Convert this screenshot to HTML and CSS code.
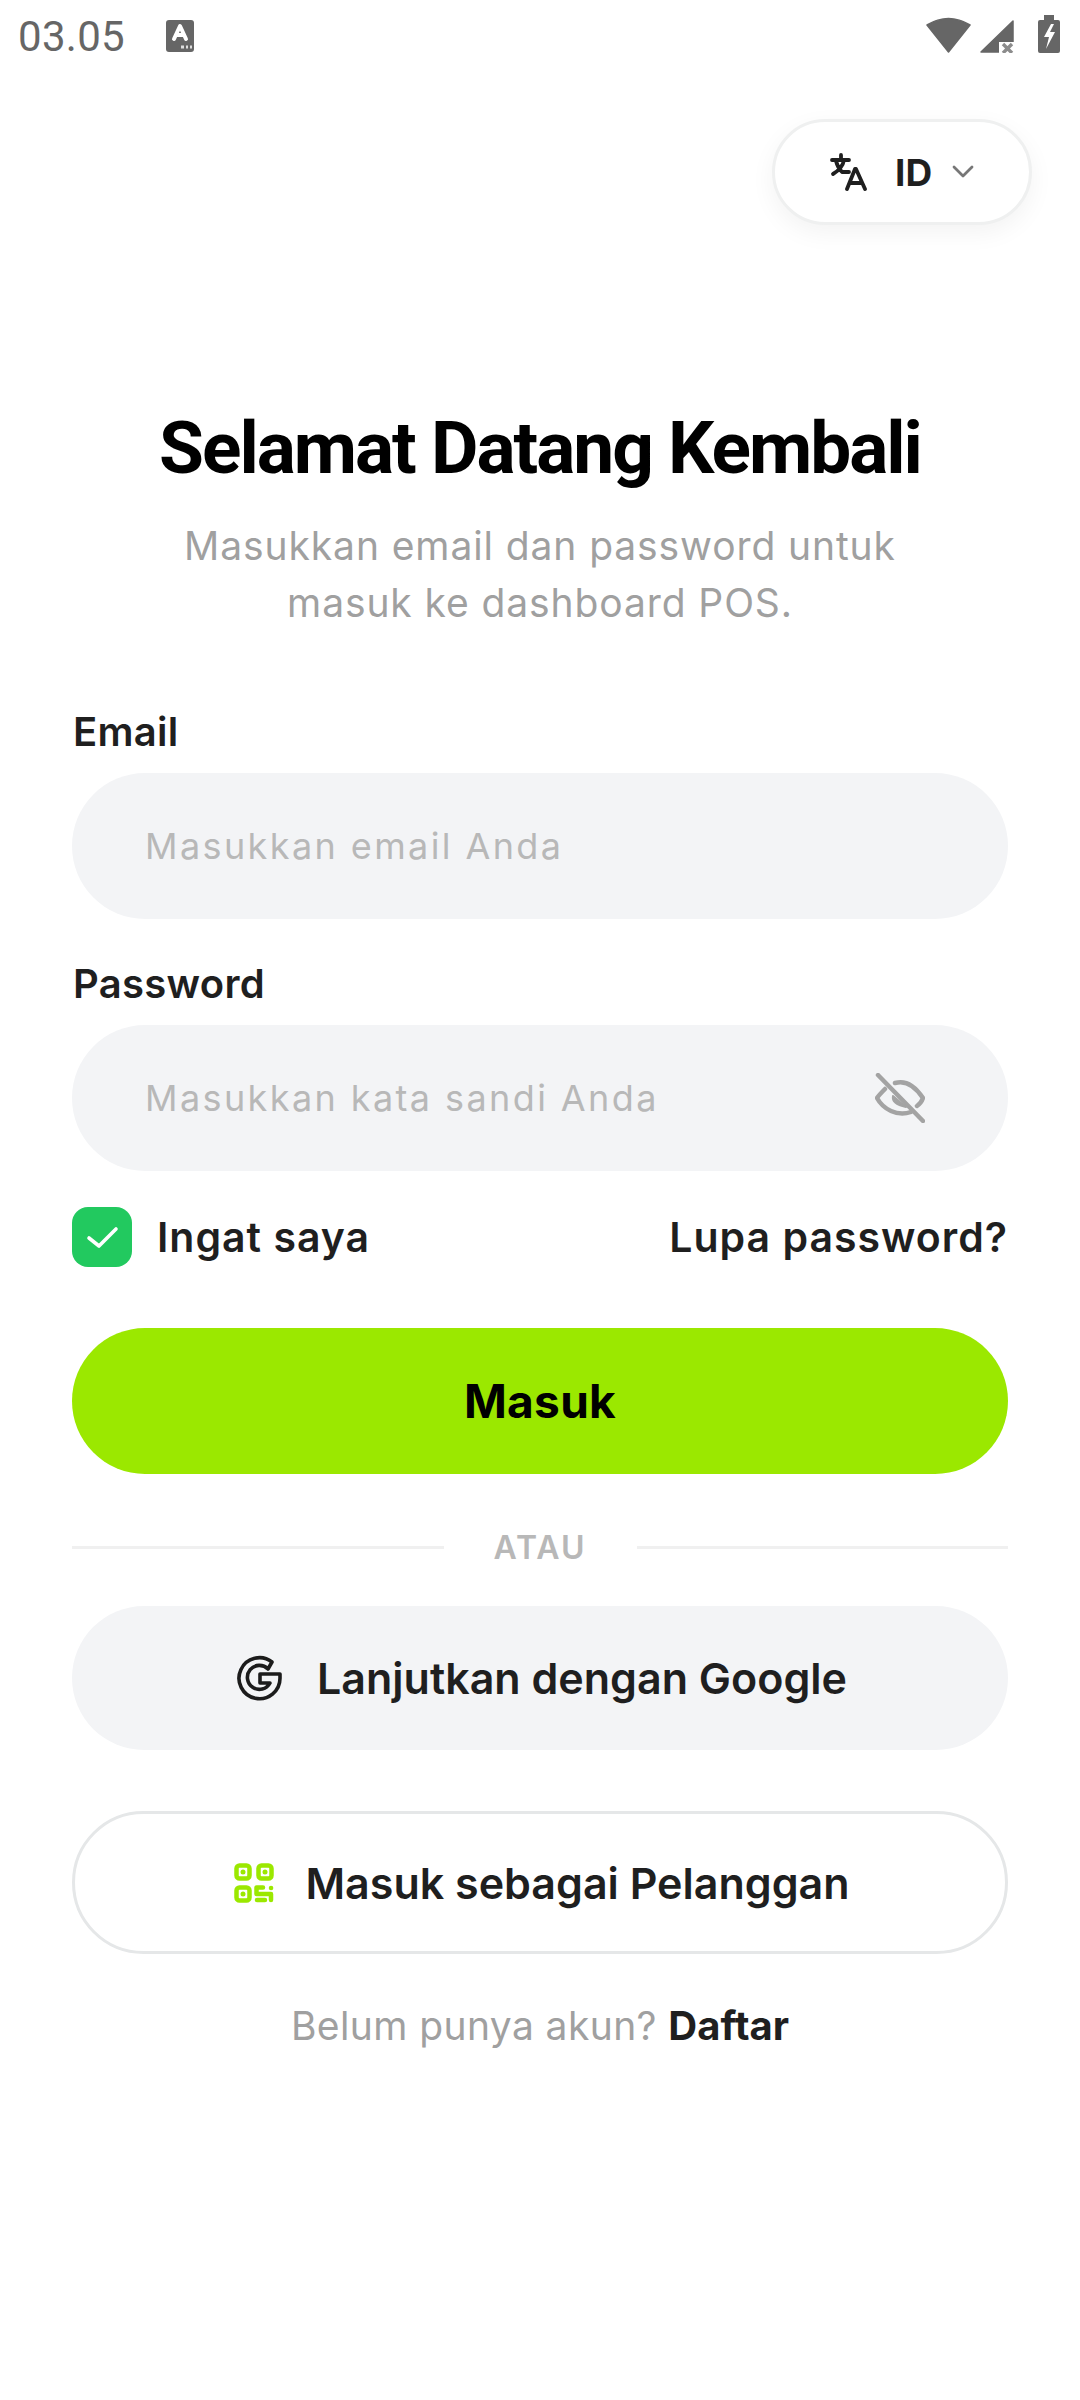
FILE: index.html
```html
<!DOCTYPE html>
<html>
  <head>
    <title>Masuk</title>
    <link rel="stylesheet" href="styles.css">
  </head>
  <body>
    <div class="statusbar">
      <div class="status-left">
        <span class="clock">03.05</span>
        <svg class="notif" width="28" height="32" viewBox="0 0 28 32">
          <rect width="28" height="32" rx="3" fill="#666"/>
          <path d="M8 19 L14 6 L20 19 M10 15 H18" fill="none" stroke="#fff" stroke-width="4" stroke-linecap="round" stroke-linejoin="round"/>
          <path d="M15 27h3M20 27h2M24 27h2" stroke="#ddd" stroke-width="3"/>
        </svg>
      </div>
      <div class="status-right">
        <svg width="45" height="36" viewBox="0 0 45 36"><path d="M1 8 Q22.500 -5 44 8 L22.500 35 Z" fill="#666" stroke="#666" stroke-width="1.500" stroke-linejoin="round"/></svg>
        <svg class="signal" width="34" height="33" viewBox="0 0 34 33">
          <path d="M1 32 L33 1 V32 Z" fill="#666" stroke="#666" stroke-width="1.500" stroke-linejoin="round"/>
          <rect x="19" y="22" width="15" height="11" fill="#fff"/>
          <path d="M23 24 L32 33 M32 24 L23 33" stroke="#8c8c8c" stroke-width="3.400"/>
        </svg>
        <svg width="22" height="38" viewBox="0 0 22 38">
          <path d="M6 0h10v5h4a2 2 0 0 1 2 2v29a2 2 0 0 1-2 2H2a2 2 0 0 1-2-2V7a2 2 0 0 1 2-2h4z" fill="#666"/>
          <path d="M13 9 L6 22 H11 L8 34 L17 17 H12 L16 9 Z" fill="#fff"/>
        </svg>
      </div>
    </div>

    <div class="lang-row">
      <div class="lang-btn">
        <svg width="37" height="39" viewBox="0 0 37 39" fill="none" stroke="#1f1f1f" stroke-width="3.800" stroke-linecap="round" stroke-linejoin="round">
          <path d="M2 7 H19 M11 2 V7 M14 7 C13 13 8 18 3 21 M6 8 C7 12 9 16 12 19 H19"/>
          <path d="M17 36 L25 16 H26 L35 36 M20 30 H32"/>
        </svg>
        <span class="lang-text">ID</span>
        <svg width="22" height="14" viewBox="0 0 22 14" fill="none" stroke="#777" stroke-width="2.800" stroke-linecap="round" stroke-linejoin="round"><path d="M2 2 L11 11 L20 2"/></svg>
      </div>
    </div>

    <main class="content">
      <h1 class="title">Selamat Datang Kembali</h1>
      <p class="subtitle">Masukkan email dan password untuk<br>masuk ke dashboard POS.</p>

      <label class="label">Email</label>
      <div class="field"><span class="placeholder">Masukkan email Anda</span></div>

      <label class="label label-password">Password</label>
      <div class="field">
        <span class="placeholder">Masukkan kata sandi Anda</span>
        <svg class="eye" width="50" height="50" viewBox="0 0 50 50" fill="none" stroke="#a3a3a3" stroke-width="4.500" stroke-linecap="round" stroke-linejoin="round">
          <path d="M3 2 L48 48"/>
          <path d="M20 10 C30 7 40 13 48 25 C47 28 45 31 42 33"/>
          <path d="M10 16 C7 19 4 22 2 25 C8 36 22 44 36 39"/>
          <path d="M18 23 C17 28 21 32 31 34 Z" fill="#a3a3a3" stroke-width="2"/>
        </svg>
      </div>

      <div class="options">
        <div class="remember">
          <span class="checkbox">
            <svg width="33" height="23" viewBox="0 0 33 23" fill="none" stroke="#fff" stroke-width="3.600" stroke-linecap="round" stroke-linejoin="round"><path d="M3 12 L13 20 L30 3"/></svg>
          </span>
          <span class="remember-text">Ingat saya</span>
        </div>
        <span class="forgot">Lupa password?</span>
      </div>

      <div class="btn-primary">Masuk</div>

      <div class="divider"><span class="line"></span><span class="or">ATAU</span><span class="line"></span></div>

      <div class="btn-google">
        <svg width="46" height="46" viewBox="0 0 46 46" fill="none" stroke="#1c1c1c" stroke-width="3.600" stroke-linecap="round" stroke-linejoin="round">
          <path d="M35 7 A20.500 20.500 0 1 0 43 23 V19 H23 V28 H33 A12 12 0 1 1 31 14 Z"/>
        </svg>
        <span>Lanjutkan dengan Google</span>
      </div>

      <div class="btn-guest">
        <svg width="40" height="40" viewBox="0 0 40 40" fill="none" stroke="#9be800" stroke-width="4.500" stroke-linecap="round" stroke-linejoin="round">
          <rect x="2.500" y="2.500" width="13" height="13" rx="3"/>
          <rect x="24.500" y="2.500" width="13" height="13" rx="3"/>
          <rect x="2.500" y="24.500" width="13" height="13" rx="3"/>
          <path d="M29 24.500 H22.500 V31 H37 V37 M23 37 H31 M37 25 H37.100"/>
          <circle cx="9" cy="9" r="2.500" fill="#9be800" stroke="none"/>
          <circle cx="31" cy="9" r="2.500" fill="#9be800" stroke="none"/>
          <circle cx="9" cy="31" r="2.500" fill="#9be800" stroke="none"/>
        </svg>
        <span>Masuk sebagai Pelanggan</span>
      </div>

      <p class="signup">Belum punya akun? <b>Daftar</b></p>
    </main>
  </body>
</html>
```

FILE: styles.css
```css
* { box-sizing: border-box; }
html, body { margin: 0; padding: 0; }
body {
  width: 1080px;
  height: 2400px;
  background: #fff;
  font-family: "Inter", "Liberation Sans", sans-serif;
  color: #1f1f1f;
  overflow: hidden;
}
.statusbar {
  height: 72px;
  padding: 0 20px 0 18px;
  display: flex;
  align-items: center;
  justify-content: space-between;
}
.status-left { display: flex; align-items: center; gap: 41px; }
.clock { font-family: "Roboto", sans-serif; font-size: 42px; color: #666; letter-spacing: 0.3px; }
.status-right { display: flex; align-items: flex-end; gap: 9px; margin-bottom: 4px; }
.status-right svg:last-child { margin-left: 15px; }
.lang-row { display: flex; justify-content: flex-end; padding: 47px 48px 0 0; }
.lang-btn {
  width: 260px;
  height: 106px;
  border: 3px solid #eff0f0;
  border-radius: 53px;
  background: #fff;
  box-shadow: 0 8px 24px rgba(0, 0, 0, 0.05);
  display: flex;
  align-items: center;
  padding-left: 55px;
}
.lang-text { font-size: 37px; font-weight: 700; margin-left: 28px; margin-right: 20px; }
.content { padding: 0 72px; }
.title {
  margin: 181px 0 0;
  font-family: "Roboto", sans-serif;
  font-size: 73px;
  font-weight: 700;
  letter-spacing: -2px;
  line-height: 84px;
  text-align: center;
  color: #000;
}
.subtitle {
  margin: 27px 0 0;
  font-size: 39px;
  letter-spacing: 0.9px;
  line-height: 57px;
  text-align: center;
  color: #a0a0a0;
}
.label { display: block; font-size: 40px; font-weight: 600; letter-spacing: 0.3px; line-height: 46px; margin: 78px 0 18px 1px; }
.label-password { margin-top: 42px; }
.field {
  height: 146px;
  border-radius: 73px;
  background: #f3f4f6;
  display: flex;
  align-items: center;
  justify-content: space-between;
  padding: 0 83px 0 73px;
}
.placeholder { font-size: 36px; color: #b8b8b8; letter-spacing: 2.4px; }
.options { display: flex; align-items: center; justify-content: space-between; margin-top: 36px; height: 60px; }
.remember { display: flex; align-items: center; gap: 25px; }
.checkbox {
  width: 60px;
  height: 60px;
  border-radius: 16px;
  background: #22c95f;
  display: flex;
  align-items: center;
  justify-content: center;
}
.remember-text { font-size: 41px; font-weight: 600; letter-spacing: 1px; }
.forgot { font-size: 41px; font-weight: 600; letter-spacing: 1px; }
.btn-primary {
  margin-top: 61px;
  height: 146px;
  border-radius: 73px;
  background: #9be800;
  color: #000;
  font-size: 46px;
  font-weight: 700;
  letter-spacing: 0.3px;
  display: flex;
  align-items: center;
  justify-content: center;
}
.divider { display: flex; align-items: center; gap: 50px; margin-top: 51px; height: 44px; }
.line { flex: 1; height: 3px; background: #f0f0f0; }
.or { font-size: 32px; font-weight: 600; color: #b8b8b8; letter-spacing: 2px; }
.btn-google, .btn-guest {
  border-radius: 72px;
  display: flex;
  align-items: center;
  justify-content: center;
  font-size: 43px;
  font-weight: 600;
  padding-left: 4px;
}
.btn-google { gap: 34px; margin-top: 37px; height: 144px; background: #f3f4f6; }
.btn-guest { gap: 31px; margin-top: 61px; height: 143px; border: 3px solid #e5e7e8; }
.signup { margin: 47px 0 0; text-align: center; font-size: 39px; letter-spacing: 0.4px; line-height: 50px; color: #a0a0a0; }
.signup b { color: #1f1f1f; font-size: 40px; font-weight: 700; letter-spacing: 0; }
```
